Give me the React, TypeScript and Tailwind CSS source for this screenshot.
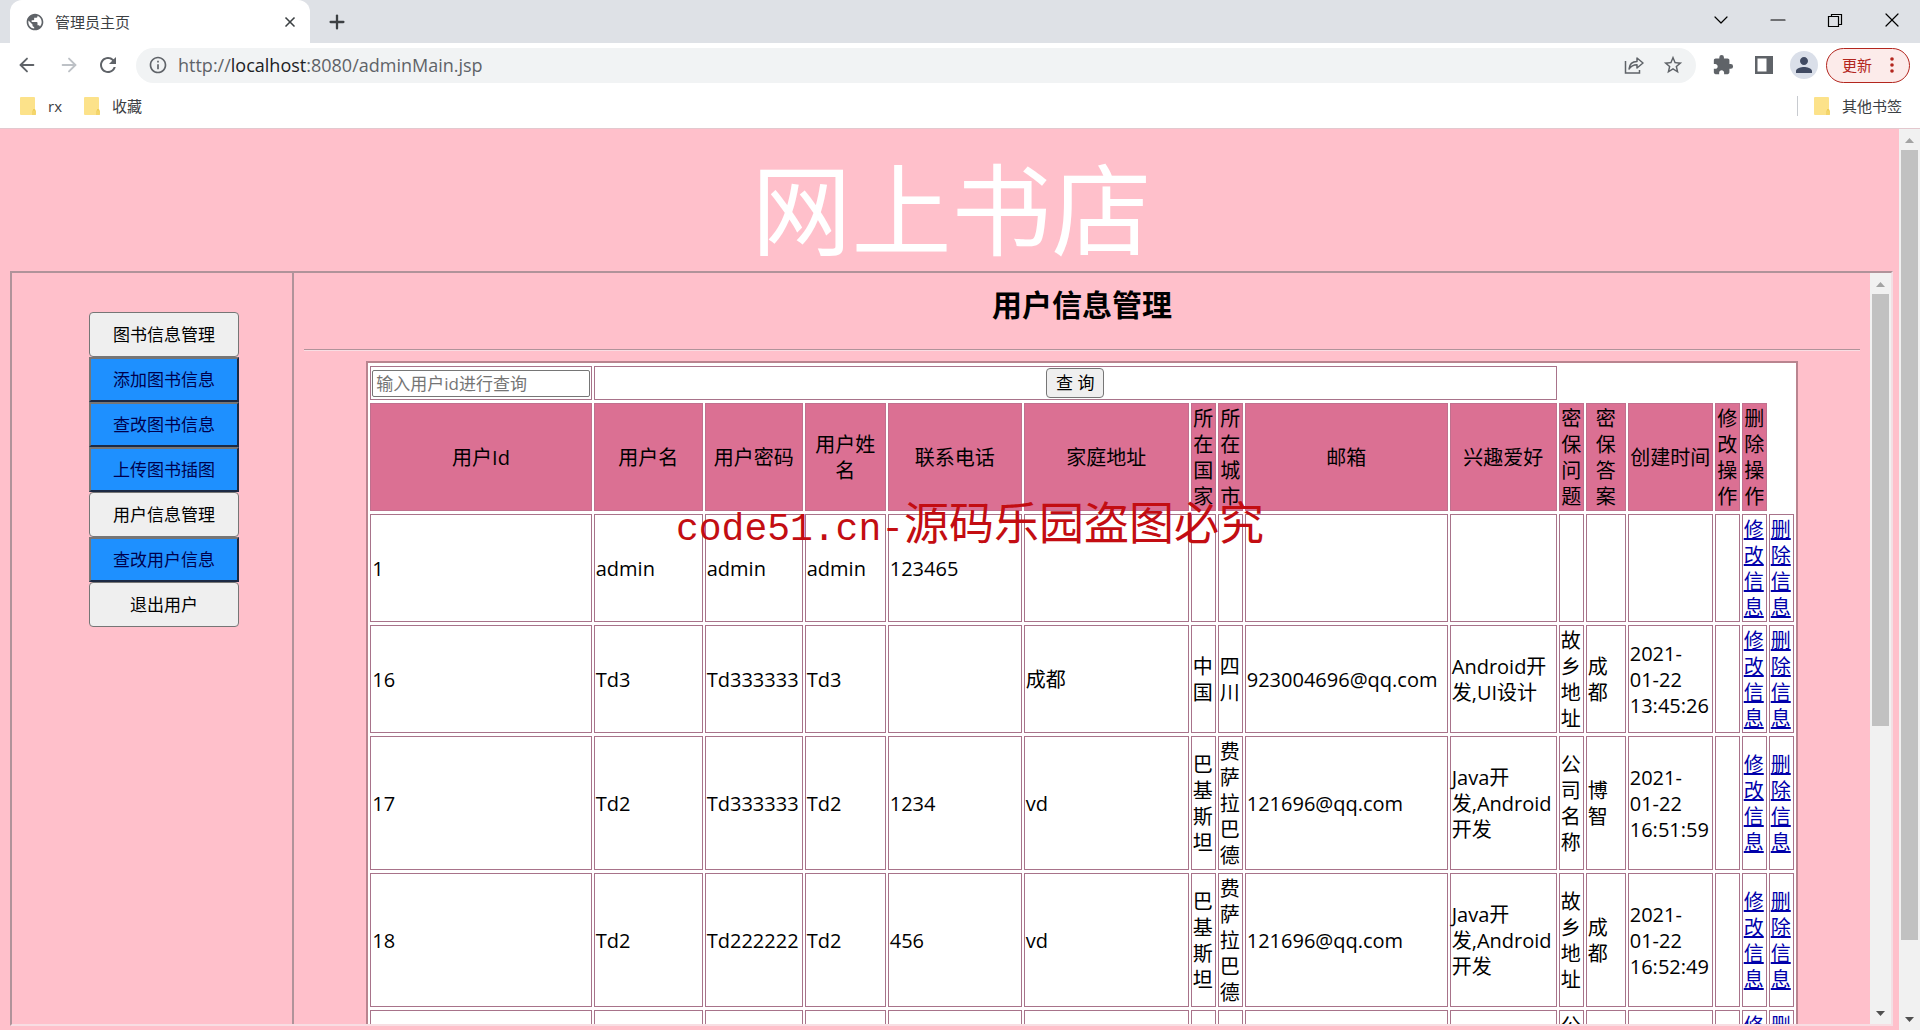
import React from 'react';
import { ArrowLeft, ArrowRight, ChevronDown, Minus, Plus, X } from 'lucide-react';
import { MdExtension, MdInfoOutline, MdPerson, MdPublic, MdRefresh, MdStarBorder } from 'react-icons/md';

interface UserRow {
  id: string;
  name: string;
  password: string;
  realName: string;
  phone: string;
  address: string;
  country: string;
  city: string;
  email: string;
  hobby: string;
  question: string;
  answer: string;
  created: string;
}

const HEADERS = [
  '用户Id', '用户名', '用户密码', '用户姓名', '联系电话', '家庭地址', '所在国家', '所在城市',
  '邮箱', '兴趣爱好', '密保问题', '密保答案', '创建时间', '修改操作', '删除操作',
];

const USERS: UserRow[] = [
  { id: '1', name: 'admin', password: 'admin', realName: 'admin', phone: '123465', address: '', country: '', city: '', email: '', hobby: '', question: '', answer: '', created: '' },
  { id: '16', name: 'Td3', password: 'Td333333', realName: 'Td3', phone: '', address: '成都', country: '中国', city: '四川', email: '923004696@qq.com', hobby: 'Android开发,UI设计', question: '故乡地址', answer: '成都', created: '2021-01-22 13:45:26' },
  { id: '17', name: 'Td2', password: 'Td333333', realName: 'Td2', phone: '1234', address: 'vd', country: '巴基斯坦', city: '费萨拉巴德', email: '121696@qq.com', hobby: 'Java开发,Android开发', question: '公司名称', answer: '博智', created: '2021-01-22 16:51:59' },
  { id: '18', name: 'Td2', password: 'Td222222', realName: 'Td2', phone: '456', address: 'vd', country: '巴基斯坦', city: '费萨拉巴德', email: '121696@qq.com', hobby: 'Java开发,Android开发', question: '故乡地址', answer: '成都', created: '2021-01-22 16:52:49' },
  { id: '', name: '', password: '', realName: '', phone: '', address: '', country: '', city: '', email: '', hobby: '', question: '公司名称', answer: '', created: '' },
];

const MENU = [
  { label: '图书信息管理', sub: false },
  { label: '添加图书信息', sub: true },
  { label: '查改图书信息', sub: true },
  { label: '上传图书插图', sub: true },
  { label: '用户信息管理', sub: false },
  { label: '查改用户信息', sub: true },
  { label: '退出用户', sub: false },
];

const Folder = () => (
  <svg viewBox="0 0 16 18" className="w-4 h-[18px] shrink-0">
    <path d="M1 0h13a1 1 0 0 1 1 1v11l1 2v3a1 1 0 0 1-1 1H1a1 1 0 0 1-1-1V1a1 1 0 0 1 1-1z" fill="#fce28a" />
    <path d="M13 18v-4l1-2 1 2v4" fill="none" stroke="#ecc94f" />
  </svg>
);

const TabStrip = () => (
  <div className="h-[43px] bg-[#dee1e6] flex items-center shrink-0">
    <div className="ml-[10px] w-[300px] h-full bg-white rounded-t-xl flex items-center pl-[15px] pr-3">
      <MdPublic className="w-5 h-5 text-[#5f6368]" />
      <span className="ml-[10px] pt-0.5 flex-1 text-[15px] text-[#3c4043]">管理员主页</span>
      <button aria-label="关闭标签页"><X className="w-4 h-4 text-[#3c4043]" strokeWidth={2.5} /></button>
    </div>
    <button aria-label="新标签页" className="ml-4"><Plus className="w-[22px] h-[22px] text-[#3c4043]" strokeWidth={2.5} /></button>
    <div className="ml-auto mr-4 mb-1 flex items-center gap-[33px] text-black">
      <button aria-label="搜索标签页"><ChevronDown className="w-6 h-6" strokeWidth={1.2} /></button>
      <button aria-label="最小化"><Minus className="w-6 h-6" strokeWidth={1.2} /></button>
      <button aria-label="还原">
        <svg viewBox="0 0 24 24" className="w-6 h-6" fill="none" stroke="currentColor" strokeWidth="1.2">
          <path d="M5.500 8.500h10v10h-10zM8.500 8.500v-2h10v10h-3" />
        </svg>
      </button>
      <button aria-label="关闭"><X className="w-6 h-6" strokeWidth={1.2} /></button>
    </div>
  </div>
);

const Toolbar = () => (
  <div className="h-11 bg-white flex items-center shrink-0 pl-4 pr-[10px] text-[#5f6368]">
    <button aria-label="后退"><ArrowLeft className="w-[22px] h-[22px]" /></button>
    <button aria-label="前进" className="ml-5"><ArrowRight className="w-[22px] h-[22px] text-[#bdc1c6]" /></button>
    <button aria-label="重新加载" className="ml-4"><MdRefresh className="w-6 h-6" /></button>
    <div className="ml-4 flex-1 h-[35px] rounded-full bg-[#f1f3f4] flex items-center px-3">
      <MdInfoOutline className="w-5 h-5" />
      <span className="ml-[10px] flex-1 text-[18px]">
        http://<span className="text-[#202124]">localhost</span>:8080/adminMain.jsp
      </span>
      <button aria-label="分享">
        <svg viewBox="0 0 20 20" className="w-5 h-5" fill="none" stroke="currentColor" strokeWidth="1.5">
          <path d="M1.500 6v12h14v-3" />
          <path d="M5 14c.5-5 3-7.500 8-7.500V3l6 5-6 5V9.800c-4 0-6 1.200-8 4.200z" strokeLinejoin="round" />
        </svg>
      </button>
      <button aria-label="收藏此页" className="ml-[18px]"><MdStarBorder className="w-[22px] h-[22px]" /></button>
    </div>
    <button aria-label="扩展程序" className="ml-4"><MdExtension className="w-[22px] h-[22px]" /></button>
    <button aria-label="侧边栏" className="ml-5">
      <svg viewBox="0 0 20 20" className="w-5 h-5">
        <path d="M1 1h18v18H1zM3.500 3.500v13h9v-13z" fill="currentColor" fillRule="evenodd" />
      </svg>
    </button>
    <button aria-label="用户" className="ml-4 w-7 h-7 rounded-full bg-[#dadfe9] flex items-center justify-center">
      <MdPerson className="w-6 h-6 text-[#414b63]" />
    </button>
    <button className="ml-2 w-[84px] h-[35px] rounded-full border border-[#b3261e] bg-[#fcebea] text-[#b3261e] text-[15px] flex items-center justify-between pl-[15px] pr-[15px]">
      更新
      <svg viewBox="0 0 4 16" className="w-1 h-4" fill="currentColor">
        <circle cx="2" cy="2" r="1.800" /><circle cx="2" cy="8" r="1.800" /><circle cx="2" cy="14" r="1.800" />
      </svg>
    </button>
  </div>
);

const Bookmarks = () => (
  <div className="h-[42px] bg-white flex items-center shrink-0 pl-5 pr-[18px] pb-[3px] text-[15px] text-[#3c4043] border-b border-[#e3c8ce]">
    <Folder />
    <a href="#rx" className="ml-3">rx</a>
    <span className="ml-[22px] flex"><Folder /></span>
    <a href="#fav" className="ml-3">收藏</a>
    <span className="ml-auto mr-4 w-px h-5 bg-[#c8cbd0]" />
    <Folder />
    <a href="#others" className="ml-3">其他书签</a>
  </div>
);

// thumb is given as a share of the track between the two arrows
const ScrollBar: React.FC<{ thumb: number }> = ({ thumb }) => (
  <div className="w-[21px] shrink-0 bg-[#f1f1f1] flex flex-col items-center">
    <svg viewBox="0 0 21 21" className="w-[21px] h-[21px]"><path d="M6 14h9l-4.500-5z" fill="#a3a3a3" /></svg>
    <div className="flex-1 w-[17px]">
      <div className="bg-[#c1c1c1]" style={{ height: `${thumb}%` }} />
    </div>
    <svg viewBox="0 0 21 21" className="w-[21px] h-[21px]"><path d="M6 8h9l-4.500 5z" fill="#505050" /></svg>
  </div>
);

const CELL = 'border border-[#a8738a] px-px pt-[2px] pb-0';

const UserTable = () => (
  <table className="table-fixed w-[92%] mx-auto bg-white border-2 border-[#b9848f] border-separate border-spacing-x-[2px] border-spacing-y-[3px]">
    <colgroup>
      <col />
      <col className="w-[109px]" />
      <col className="w-[98px]" />
      <col className="w-[81px]" />
      <col className="w-[134px]" />
      <col className="w-[165px]" />
      <col className="w-[25px]" />
      <col className="w-[25px]" />
      <col className="w-[203px]" />
      <col className="w-[107px]" />
      <col className="w-[25px]" />
      <col className="w-[40px]" />
      <col className="w-[85px]" />
      <col className="w-[25px]" />
      <col className="w-[25px]" />
      <col className="w-[25px]" />
    </colgroup>
    <tbody>
      <tr className="h-[34px]">
        <td className="border border-[#a8738a] p-px">
          <input
            type="text"
            aria-label="用户id"
            placeholder="输入用户id进行查询"
            className="block w-full h-[27px] border border-[#767676] rounded-xs px-[3px] text-[17px] placeholder-[#757575]"
          />
        </td>
        <td colSpan={9} className="border border-[#a8738a] p-px text-center">
          <button className="block mx-auto w-[58px] h-[30px] bg-[#efefef] border border-[#767676] rounded-sm text-[17px] leading-6">查 询</button>
        </td>
      </tr>
      <tr>
        {HEADERS.map(h => (
          <th key={h} scope="col" className="border border-[#c0708e] bg-[#db7093] px-px pt-[2px] pb-0 font-normal">{h}</th>
        ))}
      </tr>
      {USERS.map((u, i) => (
        <tr key={i}>
          <td className={CELL}>{u.id}</td>
          <td className={CELL}>{u.name}</td>
          <td className={CELL}>{u.password}</td>
          <td className={CELL}>{u.realName}</td>
          <td className={CELL}>{u.phone}</td>
          <td className={CELL}>{u.address}</td>
          <td className={CELL}>{u.country}</td>
          <td className={CELL}>{u.city}</td>
          <td className={CELL}>{u.email}</td>
          <td className={CELL}>{u.hobby}</td>
          <td className={CELL}>{u.question}</td>
          <td className={CELL}>{u.answer}</td>
          <td className={CELL}>{u.created}</td>
          <td className={CELL}></td>
          <td className={CELL}><a href="#edit" className="text-[#0000aa] underline">修改信息</a></td>
          <td className={CELL}><a href="#delete" className="text-[#0000aa] underline">删除信息</a></td>
        </tr>
      ))}
    </tbody>
  </table>
);

export default function App() {
  return (
    <div className="h-screen flex flex-col overflow-hidden relative text-black font-['Open_Sans','Noto_Sans_CJK_SC',sans-serif]">
      <TabStrip />
      <Toolbar />
      <Bookmarks />

      <div className="flex-1 min-h-0 flex bg-[#ffc0cb]">
        <div className="flex-1 min-w-0 flex flex-col pl-[10px] pr-[6px] pb-1">
          <h1 className="h-[142px] pt-5 shrink-0 text-center text-white text-[100px] leading-[120px]">网上书店</h1>

          <div className="flex-1 min-h-0 flex border-2 border-t-[#b0939a] border-l-[#b0939a] border-r-[#f3dfe4] border-b-[#f8dde3]">
            <nav className="w-[282px] shrink-0 border-r-2 border-[#b0939a] pt-[39px] pl-[77px] flex flex-col">
              {MENU.map(m => (
                <button
                  key={m.label}
                  className={`w-[150px] h-[45px] text-[17px] ${
                    m.sub
                      ? 'bg-[#1e90ff] text-[#00004d] border-2 border-t-[#767676] border-l-[#767676] border-r-[#1c2a44] border-b-[#1c2a44]'
                      : 'bg-[#efefef] border border-[#767676] rounded-sm'
                  }`}
                >
                  {m.label}
                </button>
              ))}
            </nav>

            <main className="flex-1 min-w-0 overflow-hidden px-[10px] text-xl leading-[26px]">
              <h2 className="pt-3 pb-6 text-center text-[30px] leading-10 font-bold">用户信息管理</h2>
              <hr className="border-t-[#b0939a] border-b border-b-[#f8dde3] mb-[10px]" />
              <UserTable />
            </main>
            <ScrollBar thumb={61} />
          </div>
        </div>
        <ScrollBar thumb={92} />
      </div>

      {/* Watermark */}
      <div className="absolute inset-x-0 top-[498px] pl-[20px] text-center text-[45px] leading-[50px] text-[#c30d12] pointer-events-none">
        <span className="text-[38px] font-['Liberation_Mono',monospace]">code51.cn-</span>源码乐园盗图必究
      </div>
    </div>
  );
}
